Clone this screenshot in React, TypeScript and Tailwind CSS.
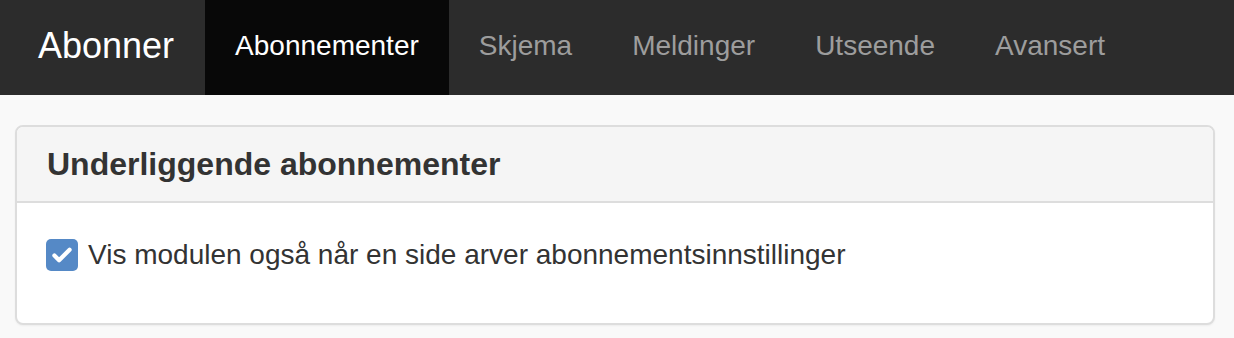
import React, { useState } from "react";

const tabs = ["Abonnementer", "Skjema", "Meldinger", "Utseende", "Avansert"];

export default function App() {
  const [active, setActive] = useState("Abonnementer");
  const [checked, setChecked] = useState(true);

  return (
    <div className="min-h-[338px] bg-[#f9f9f9] font-['Liberation_Sans',Arial,sans-serif]">
      {/* Top navigation */}
      <nav className="flex h-[95px] items-stretch bg-[#2c2c2c]">
        <div className="flex items-center pb-[3px] pl-[38px] pr-[31px] text-[36px] text-white">Abonner</div>
        {tabs.map((t) => (
          <button
            key={t}
            onClick={() => setActive(t)}
            className={`flex items-center px-[30px] pb-[3px] text-[28px] ${
              active === t ? "bg-[#080808] text-white" : "text-[#9d9d9d] hover:text-white"
            }`}
          >
            {t}
          </button>
        ))}
      </nav>

      {/* Panel */}
      <div className="pl-[15px] pr-[19px] pt-[30px]">
        <div className="overflow-hidden rounded-[8px] border-2 border-[#dddddd] bg-white shadow-[0_1px_2px_rgba(0,0,0,0.05)]">
          <div className="flex h-[76px] items-center border-b-2 border-[#dddddd] bg-[#f5f5f5] px-[30px]">
            <h3 className="text-[32px] font-bold text-[#333333]">Underliggende abonnementer</h3>
          </div>
          <div className="h-[120px] px-[29px] pt-[31px]">
            <label className="flex cursor-pointer items-center gap-[10px] text-[28px] text-[#333333]">
              <span
                onClick={() => setChecked(!checked)}
                className={`flex h-[32px] w-[32px] items-center justify-center rounded-[5px] ${
                  checked ? "bg-[#5589c6]" : "border-2 border-[#aaaaaa] bg-white"
                }`}
              >
                {checked && (
                  <svg viewBox="0 0 24 24" className="h-[28px] w-[28px]" fill="none" stroke="white" strokeWidth="3.6" strokeLinecap="round" strokeLinejoin="round">
                    <path d="M5.5 12.5l4 4L18.5 7.5" />
                  </svg>
                )}
              </span>
              Vis modulen også når en side arver abonnementsinnstillinger
            </label>
          </div>
        </div>
      </div>
    </div>
  );
}
